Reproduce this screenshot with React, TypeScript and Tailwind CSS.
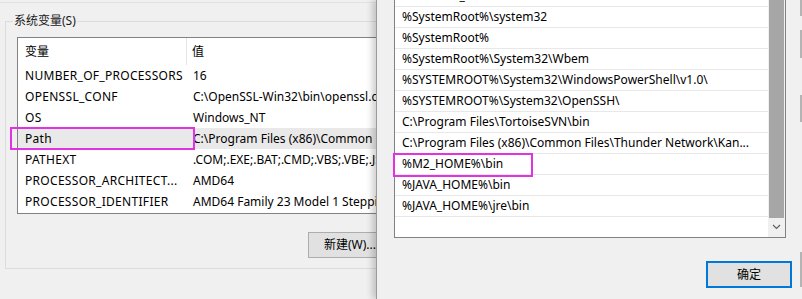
import React from "react";

const leftRows: [string, string][] = [
  ["NUMBER_OF_PROCESSORS", "16"],
  ["OPENSSL_CONF", "C:\\OpenSSL-Win32\\bin\\openssl.cfg"],
  ["OS", "Windows_NT"],
  ["Path", "C:\\Program Files (x86)\\Common Files\\Oracle\\Java"],
  ["PATHEXT", ".COM;.EXE;.BAT;.CMD;.VBS;.VBE;.JS;.JSE;.WSF"],
  ["PROCESSOR_ARCHITECT...", "AMD64"],
  ["PROCESSOR_IDENTIFIER", "AMD64 Family 23 Model 1 Stepping 1, AuthenticAMD"],
];

const rightRows = [
  "%MONGO_HOME%\\bin",
  "%SystemRoot%\\system32",
  "%SystemRoot%",
  "%SystemRoot%\\System32\\Wbem",
  "%SYSTEMROOT%\\System32\\WindowsPowerShell\\v1.0\\",
  "%SYSTEMROOT%\\System32\\OpenSSH\\",
  "C:\\Program Files\\TortoiseSVN\\bin",
  "C:\\Program Files (x86)\\Common Files\\Thunder Network\\Kan...",
  "%M2_HOME%\\bin",
  "%JAVA_HOME%\\bin",
  "%JAVA_HOME%\\jre\\bin",
  "",
];

const font = {
  fontFamily: '"Segoe UI", "Noto Sans", "Noto Sans CJK SC", sans-serif',
};

export default function App() {
  return (
    <div
      className="relative flex w-[802px] h-[299px] overflow-hidden bg-[#f0f0f0] text-[12px] text-[#000]"
      style={font}
    >
      {/* Left dialog */}
      <div className="w-[376px] h-full shrink-0 overflow-hidden">
        <div className="h-[2px]" />
        <div className="h-px bg-[#e2e2e2]" />
        <div className="h-[18px]" />
        <div className="relative ml-[5px] w-[420px] h-[248px] border-l border-t border-b border-[#dcdcdc]">
          <span className="absolute left-[7px] top-[-10px] px-px bg-[#f0f0f0] leading-[18px] text-[#1a1a1a]">
            系统变量(S)
          </span>
          <div className="ml-[11px] mt-[15px] w-[420px] h-[177px] border border-[#828282] bg-white">
            <div className="flex h-[27px] items-center">
              <div className="w-[169px] shrink-0 pl-[7px] h-full flex items-center border-r border-[#e5e5e5]">
                变量
              </div>
              <div className="pl-[5px]">值</div>
            </div>
            {leftRows.map(([k, v]) => (
              <div
                key={k}
                className={`flex h-[21px] items-center whitespace-nowrap ${
                  k === "Path" ? "bg-[#e9e9e9]" : ""
                }`}
              >
                <div className="w-[170px] shrink-0 pl-[7px] overflow-hidden tracking-[0.3px]">{k}</div>
                <div className="pl-[5px] shrink-0">{v}</div>
              </div>
            ))}
          </div>
          <div className="mt-[18px] ml-[302px] w-[100px] h-[26px] border border-[#adadad] bg-[#e1e1e1] flex items-center pl-[15px] whitespace-nowrap">
            新建(W)...
          </div>
        </div>
      </div>

      {/* Right dialog */}
      <div className="relative z-10 flex-1 h-full bg-[#f0f0f0] border-l border-[#9a9a9a] shadow-[-4px_0_6px_rgba(0,0,0,0.18)]">
        <div className="ml-[17px] w-[392px] h-[238px] border-l border-r border-b border-[#828282] bg-white flex overflow-hidden">
          <div className="flex-1 overflow-hidden">
            <div className="-mt-[14px]">
              {rightRows.map((r, i) => (
                <div
                  key={i}
                  className="h-[21px] border-b border-[#e8e8e8] flex items-center pl-[7px] whitespace-nowrap"
                >
                  {r}
                </div>
              ))}
            </div>
          </div>
          <div className="w-[17px] h-full bg-[#f0f0f0] flex flex-col items-center">
            <div className="w-[15px] h-[218px] bg-[#a6a6a6]" />
            <svg width="9" height="6" viewBox="0 0 9 6" className="mt-[6px]">
              <path d="M1 1 L4.5 4.5 L8 1" fill="none" stroke="#606060" strokeWidth="1.2" />
            </svg>
          </div>
        </div>
        <div className="mt-[23px] ml-[329px] w-[86px] h-[27px] border-2 border-[#0078d7] bg-[#e1e1e1] flex items-center justify-center">
          确定
        </div>
        {/* cut-off buttons at the right edge */}
        <div className="absolute right-0 top-0 w-[2px] h-[16px] bg-[#b4b4b4]" />
        <div className="absolute right-0 top-[30px] w-[2px] h-[28px] bg-[#b4b4b4]" />
        <div className="absolute right-0 top-[95px] w-[2px] h-[27px] bg-[#b4b4b4]" />
        <div className="absolute right-0 top-[252px] w-[2px] h-[35px] bg-[#b4b4b4]" />
      </div>

      {/* annotation boxes */}
      <div className="absolute z-20 left-[10px] top-[127px] w-[185px] h-[23px] border-2 border-[#e233e2]" />
      <div className="absolute z-20 left-[393px] top-[153px] w-[140px] h-[24px] border-2 border-[#e233e2]" />
    </div>
  );
}
